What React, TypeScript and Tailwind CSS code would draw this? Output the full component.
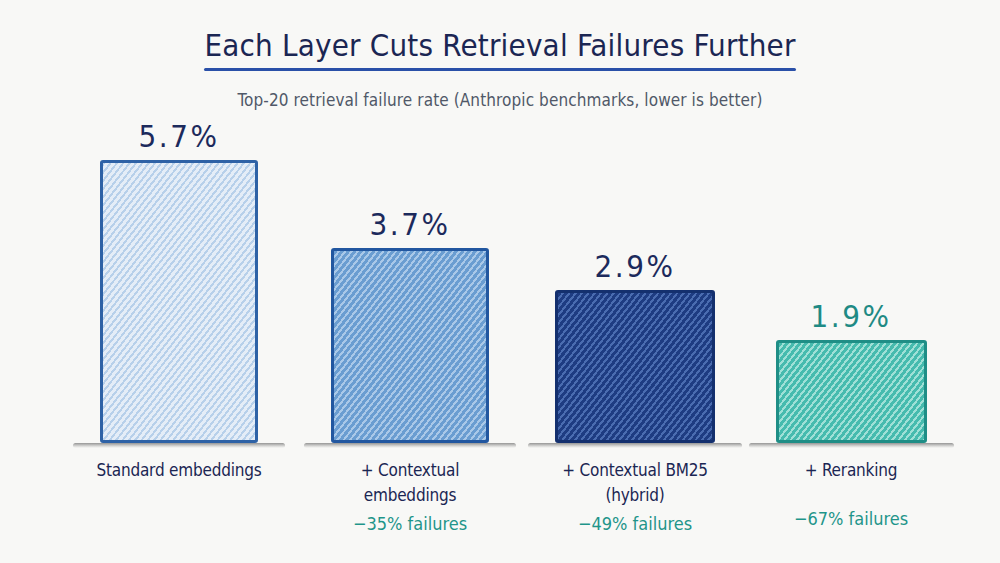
import React from 'react';

interface Bar {
    value: string;
    height: number;
    width: number;
    col: number;
    label: string[];
    delta?: string;
    valueClass: string;
    barClass: string;
}

const bars: Bar[] = [
    {
        value: '5.7%',
        height: 283,
        width: 158,
        col: 230,
        label: ['Standard embeddings'],
        valueClass: 'text-[#1c2a5c]',
        barClass:
            'border-[#2e62a6] bg-[repeating-linear-gradient(128deg,#b7d0ea_0px,#b7d0ea_2px,#e4edf7_2px,#e4edf7_5px)]',
    },
    {
        value: '3.7%',
        height: 195,
        width: 158,
        col: 232,
        label: ['+ Contextual', 'embeddings'],
        delta: '\u221235% failures',
        valueClass: 'text-[#1c2a5c]',
        barClass:
            'border-[#2257a0] bg-[repeating-linear-gradient(128deg,#6a9dd1_0px,#6a9dd1_3px,#a9c8e8_3px,#a9c8e8_5px)]',
    },
    {
        value: '2.9%',
        height: 153,
        width: 160,
        col: 218,
        label: ['+ Contextual BM25', '(hybrid)'],
        delta: '\u221249% failures',
        valueClass: 'text-[#1c2a5c]',
        barClass:
            'border-[#14306e] bg-[repeating-linear-gradient(128deg,#1e3c82_0px,#1e3c82_3px,#4a6cb0_3px,#4a6cb0_5px)]',
    },
    {
        value: '1.9%',
        height: 103,
        width: 151,
        col: 214,
        label: ['+ Reranking'],
        delta: '\u221267% failures',
        valueClass: 'text-[#1f8a84]',
        barClass:
            'border-[#1f8e86] bg-[repeating-linear-gradient(128deg,#46bbae_0px,#46bbae_3px,#9fe0d6_3px,#9fe0d6_5px)]',
    },
];

export default function App() {
    return (
        <div
            className="w-[1000px] h-[563px] bg-[#f8f8f6] overflow-hidden flex flex-col items-center font-stretch-condensed"
            style={{ fontFamily: '"DejaVu Sans", sans-serif' }}
        >
            <div className="pt-[25px] flex flex-col items-center">
                <h1 className="text-[31px] leading-[40px] text-[#1b2653] tracking-[0.2px]">
                    Each Layer Cuts Retrieval Failures Further
                </h1>
                <div className="mt-[3px] w-[592px] h-[3px] rounded-full bg-[#2a50a8]" />
                <p className="mt-[18px] text-[17px] leading-[22px] text-[#505868] tracking-[0.1px]">
                    Top-20 retrieval failure rate (Anthropic benchmarks, lower is better)
                </p>
            </div>

            <div className="self-start pl-[64px] mt-[5px] flex items-start">
                {bars.map((b) => (
                    <div key={b.value} className="flex flex-col items-center" style={{ width: b.col }}>
                        <div className="h-[327px] flex flex-col items-center justify-end">
                            <div className={`text-[31px] leading-[36px] tracking-[2.5px] mb-[6px] ${b.valueClass}`}>
                                {b.value}
                            </div>
                            <div
                                className={`shrink-0 border-[3px] rounded-[3px] ${b.barClass}`}
                                style={{ width: b.width, height: b.height }}
                            />
                        </div>
                        <div
                            className="h-[5px] bg-[linear-gradient(180deg,#7d7d7d,#cfcfcd_60%,transparent)] rounded-full opacity-80"
                            style={{ width: b.width + 54 }}
                        />
                        <div className="mt-[10px] flex flex-col items-center text-[17px] leading-[25px] tracking-[-0.2px] text-[#1b2653]">
                            {b.label.map((l) => (
                                <span key={l}>{l}</span>
                            ))}
                        </div>
                        {b.delta && (
                            <div
                                className={`text-[18px] leading-[24px] text-[#1f958a] ${
                                    b.label.length > 1 ? 'mt-[4px]' : 'mt-[24px]'
                                }`}
                            >
                                {b.delta}
                            </div>
                        )}
                    </div>
                ))}
            </div>
        </div>
    );
}
